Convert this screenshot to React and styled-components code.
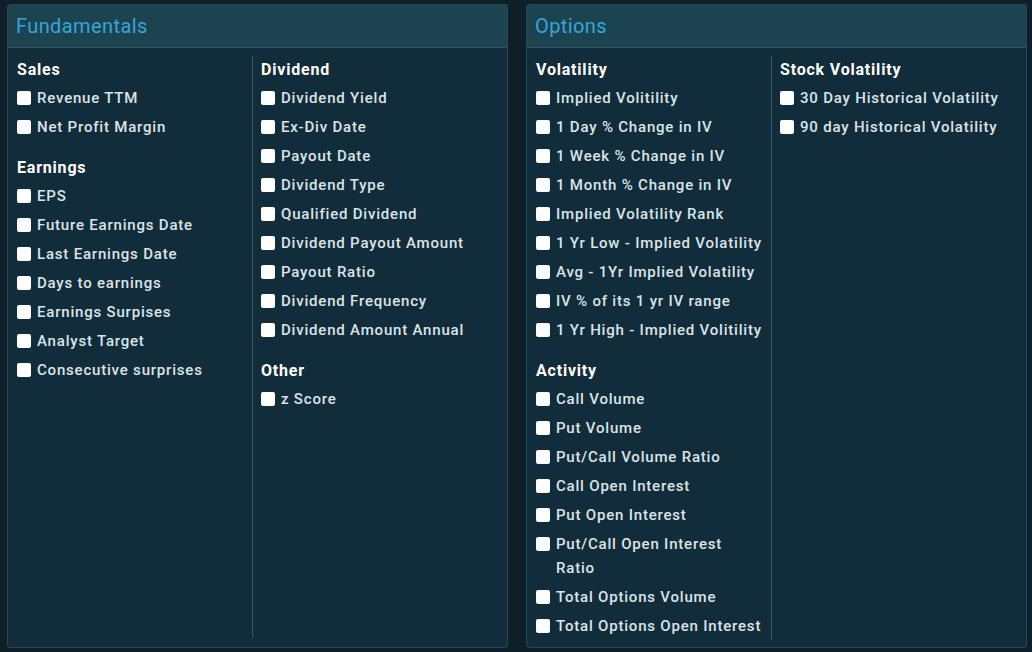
import styled, { createGlobalStyle } from "styled-components";

const fundamentals = [
  [
    { title: "Sales", items: ["Revenue TTM", "Net Profit Margin"] },
    {
      title: "Earnings",
      items: [
        "EPS",
        "Future Earnings Date",
        "Last Earnings Date",
        "Days to earnings",
        "Earnings Surpises",
        "Analyst Target",
        "Consecutive surprises",
      ],
    },
  ],
  [
    {
      title: "Dividend",
      items: [
        "Dividend Yield",
        "Ex-Div Date",
        "Payout Date",
        "Dividend Type",
        "Qualified Dividend",
        "Dividend Payout Amount",
        "Payout Ratio",
        "Dividend Frequency",
        "Dividend Amount Annual",
      ],
    },
    { title: "Other", items: ["z Score"] },
  ],
];

const options = [
  [
    {
      title: "Volatility",
      items: [
        "Implied Volitility",
        "1 Day % Change in IV",
        "1 Week % Change in IV",
        "1 Month % Change in IV",
        "Implied Volatility Rank",
        "1 Yr Low - Implied Volatility",
        "Avg - 1Yr Implied Volatility",
        "IV % of its 1 yr IV range",
        "1 Yr High - Implied Volitility",
      ],
    },
    {
      title: "Activity",
      items: [
        "Call Volume",
        "Put Volume",
        "Put/Call Volume Ratio",
        "Call Open Interest",
        "Put Open Interest",
        "Put/Call Open Interest Ratio",
        "Total Options Volume",
        "Total Options Open Interest",
      ],
    },
  ],
  [
    {
      title: "Stock Volatility",
      items: ["30 Day Historical Volatility", "90 day Historical Volatility"],
    },
  ],
];

function Panel({ title, columns }) {
  return (
    <PanelBox>
      <PanelHeader>{title}</PanelHeader>
      <PanelBody>
        {columns.map((groups, ci) => (
          <Column key={ci} $first={ci === 0}>
            {groups.map((g) => (
              <Group key={g.title}>
                <GroupTitle>{g.title}</GroupTitle>
                {g.items.map((item) => (
                  <Item key={item}>
                    <Check type="checkbox" />
                    <ItemText $narrow={item === "Put/Call Open Interest Ratio"}>
                      {item}
                    </ItemText>
                  </Item>
                ))}
              </Group>
            ))}
          </Column>
        ))}
      </PanelBody>
    </PanelBox>
  );
}

export default function App() {
  return (
    <>
      <GlobalStyle />
      <Page>
        <Panel title="Fundamentals" columns={fundamentals} />
        <Panel title="Options" columns={options} />
      </Page>
    </>
  );
}

const GlobalStyle = createGlobalStyle`
  html, body {
    margin: 0;
    background: #0e1f2a;
  }
  body {
    font-family: Roboto, "Liberation Sans", sans-serif;
  }
`;

const Page = styled.div`
  width: 1032px;
  height: 652px;
  box-sizing: border-box;
  padding: 4px 5px 4px 7px;
  display: flex;
  gap: 18px;
`;

const PanelBox = styled.div`
  width: 501px;
  height: 644px;
  box-sizing: border-box;
  border: 1px solid #2a4853;
  border-radius: 3px;
  background: #112c3a;
  display: flex;
  flex-direction: column;
  overflow: hidden;
`;

const PanelHeader = styled.div`
  height: 42px;
  flex-shrink: 0;
  background: #1b4450;
  border-bottom: 1px solid #2f5762;
  color: #38a4d8;
  font-size: 20px;
  letter-spacing: 0.4px;
  line-height: 42px;
  padding-left: 8px;
`;

const PanelBody = styled.div`
  flex: 1;
  display: grid;
  grid-template-columns: 245px 1fr;
  padding: 8px 0 9px;
`;

const Column = styled.div`
  padding-top: 1px;
  padding-left: ${(p) => (p.$first ? "9px" : "8px")};
  border-right: ${(p) => (p.$first ? "1px solid #3a5661" : "none")};
`;

const Group = styled.div`
  & + & {
    margin-top: 14px;
  }
`;

const GroupTitle = styled.div`
  color: #ffffff;
  font-weight: 700;
  font-size: 16px;
  letter-spacing: 0.8px;
  line-height: 26px;
`;

const Item = styled.label`
  display: flex;
  align-items: flex-start;
  gap: 6px;
  padding: 2.5px 0;
  color: #dde4e8;
  font-size: 15px;
  font-weight: 500;
  letter-spacing: 0.8px;
  line-height: 24px;
`;

const ItemText = styled.span`
  max-width: ${(p) => (p.$narrow ? "180px" : "none")};
  white-space: ${(p) => (p.$narrow ? "normal" : "nowrap")};
`;

const Check = styled.input`
  appearance: none;
  margin: 5px 0 0 0;
  width: 14px;
  height: 14px;
  flex-shrink: 0;
  background: #ffffff;
  border-radius: 2px;
`;
